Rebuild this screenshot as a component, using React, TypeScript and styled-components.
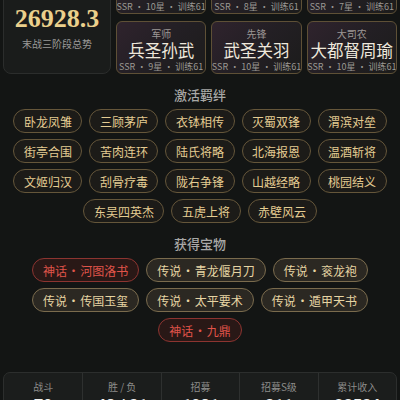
import styled, { createGlobalStyle } from "styled-components";

type Tone = "myth" | "legend";

type Hero = {
	role: string;
	name: string;
	meta: string;
};

const heroes: Hero[] = [
	{ role: "主公", name: "昭烈帝刘备", meta: "SSR · 10星 · 训练61" },
	{ role: "统帅", name: "魏武曹操", meta: "SSR · 8星 · 训练61" },
	{ role: "谋主", name: "卧龙诸葛", meta: "SSR · 7星 · 训练61" },
	{ role: "军师", name: "兵圣孙武", meta: "SSR · 9星 · 训练61" },
	{ role: "先锋", name: "武圣关羽", meta: "SSR · 10星 · 训练61" },
	{ role: "大司农", name: "大都督周瑜", meta: "SSR · 10星 · 训练61" },
];

const bonds = [
	"卧龙凤雏", "三顾茅庐", "衣钵相传", "灭蜀双锋", "渭滨对垒",
	"街亭合围", "苦肉连环", "陆氏将略", "北海报恩", "温酒斩将",
	"文姬归汉", "刮骨疗毒", "陇右争锋", "山越经略", "桃园结义",
	"东吴四英杰", "五虎上将", "赤壁风云",
];

const treasures: { tone: Tone; label: string }[] = [
	{ tone: "myth", label: "神话 · 河图洛书" },
	{ tone: "legend", label: "传说 · 青龙偃月刀" },
	{ tone: "legend", label: "传说 · 衮龙袍" },
	{ tone: "legend", label: "传说 · 传国玉玺" },
	{ tone: "legend", label: "传说 · 太平要术" },
	{ tone: "legend", label: "传说 · 遁甲天书" },
	{ tone: "myth", label: "神话 · 九鼎" },
];

const stats = [
	{ label: "战斗", value: "79" },
	{ label: "胜 / 负", value: "48 / 31" },
	{ label: "招募", value: "1081" },
	{ label: "招募S级", value: "311" },
	{ label: "累计收入", value: "23534" },
];

const App = () => {
	return (
		<>
			<GlobalStyle />
			<Page>
				<TopGrid>
					<ScorePanel>
						<Score>26928.3</Score>
						<ScoreCaption>末战三阶段总势</ScoreCaption>
					</ScorePanel>
					{heroes.map((hero) => (
						<HeroCard key={hero.name}>
							<HeroRole>{hero.role}</HeroRole>
							<HeroName>{hero.name}</HeroName>
							<HeroMeta>{hero.meta}</HeroMeta>
						</HeroCard>
					))}
				</TopGrid>

				<SectionTitle>激活羁绊</SectionTitle>
				<TagList>
					{bonds.map((bond) => (
						<BondTag key={bond}>{bond}</BondTag>
					))}
				</TagList>

				<SectionTitle>获得宝物</SectionTitle>
				<TagList>
					{treasures.map((t) => (
						<TreasureTag key={t.label} $tone={t.tone}>
							{t.label}
						</TreasureTag>
					))}
				</TagList>

				<StatsPanel>
					{stats.map((s) => (
						<StatCell key={s.label}>
							<StatLabel>{s.label}</StatLabel>
							<StatValue>{s.value}</StatValue>
						</StatCell>
					))}
				</StatsPanel>
			</Page>
		</>
	);
};

const GlobalStyle = createGlobalStyle`
	html, body {
		margin: 0;
		padding: 0;
		background: #131514;
		overflow: hidden;
	}
	body {
		font-family: "Noto Sans CJK SC", "Noto Sans", sans-serif;
	}
`;

const Page = styled.div`
	margin-top: -39px;
	padding: 0 3px;
	display: flex;
	flex-direction: column;
`;

const TopGrid = styled.div`
	display: grid;
	grid-template-columns: 108px repeat(3, 1fr);
	grid-template-rows: 53px 53px;
	gap: 7px 5px;
`;

const ScorePanel = styled.div`
	grid-row: 1 / span 2;
	display: flex;
	flex-direction: column;
	align-items: center;
	justify-content: flex-end;
	padding-bottom: 22px;
	background: #1a1c1b;
	border: 1px solid #2b2d2c;
	border-radius: 8px;
`;

const Score = styled.div`
	font-family: "Liberation Serif", serif;
	font-weight: 700;
	font-size: 26px;
	line-height: 30px;
	color: #ebd08c;
`;

const ScoreCaption = styled.div`
	margin-top: 3px;
	font-size: 10px;
	line-height: 14px;
	color: #9a9a98;
`;

const HeroCard = styled.div`
	display: flex;
	flex-direction: column;
	align-items: center;
	justify-content: center;
	padding-top: 5px;
	box-sizing: border-box;
	background: linear-gradient(135deg, #2f232d 0%, #231f24 50%, #1c1c1b 100%);
	border: 1.5px solid #5e5036;
	border-radius: 6px;
	overflow: hidden;
`;

const HeroRole = styled.div`
	font-size: 10px;
	line-height: 12px;
	color: #9d9795;
`;

const HeroName = styled.div`
	font-size: 16.5px;
	line-height: 21px;
	color: #eee8dc;
	white-space: nowrap;
`;

const HeroMeta = styled.div`
	font-size: 9px;
	line-height: 11px;
	color: #9b9893;
	white-space: nowrap;
`;

const SectionTitle = styled.div`
	margin-top: 12px;
	text-align: center;
	font-size: 13px;
	font-weight: 500;
	line-height: 18px;
	color: #a8a8a6;
`;

const TagList = styled.div`
	margin-top: 5px;
	display: flex;
	flex-wrap: wrap;
	justify-content: center;
	gap: 6px 7px;
`;

const BondTag = styled.div`
	height: 24px;
	box-sizing: border-box;
	display: flex;
	align-items: center;
	padding: 0 9.5px;
	border: 1.5px solid #65563a;
	border-radius: 12px;
	background: #1c1b18;
	font-size: 12px;
	color: #e4cc92;
	white-space: nowrap;
`;

const TreasureTag = styled.div<{ $tone: Tone }>`
	height: 24px;
	box-sizing: border-box;
	display: flex;
	align-items: center;
	padding: 0 10px;
	word-spacing: -2px;
	border: 1.5px solid ${({ $tone }) => ($tone === "myth" ? "#8c3430" : "#7a6b4d")};
	border-radius: 12px;
	background: ${({ $tone }) => ($tone === "myth" ? "#291816" : "#2b2822")};
	font-size: 12px;
	color: ${({ $tone }) => ($tone === "myth" ? "#e0544a" : "#e6d4a2")};
	white-space: nowrap;
`;

const StatsPanel = styled.div`
	margin-top: 30px;
	display: grid;
	grid-template-columns: repeat(5, 1fr);
	background: #1b1d1c;
	border: 1px solid #2c2e2d;
	border-radius: 7px;
`;

const StatCell = styled.div`
	display: flex;
	flex-direction: column;
	align-items: center;
	padding: 7px 0 8px;
	border-left: 1px solid #2e302f;

	&:first-child {
		border-left: none;
	}
`;

const StatLabel = styled.div`
	font-size: 10px;
	line-height: 14px;
	color: #8c8c8a;
`;

const StatValue = styled.div`
	margin-top: 2px;
	font-family: "Roboto", sans-serif;
	font-weight: 700;
	font-size: 16px;
	line-height: 20px;
	color: #f0f0ee;
`;

export default App;
